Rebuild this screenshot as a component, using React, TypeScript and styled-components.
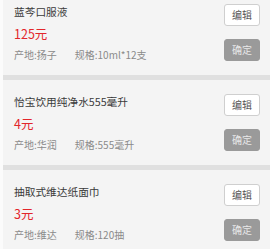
import React from "react";
import styled, { createGlobalStyle } from "styled-components";

const Global = createGlobalStyle`
  html, body { margin: 0; padding: 0; background: #fbfbfb; overflow: hidden; }
  body { font-family: "Noto Sans CJK SC", "Noto Sans", sans-serif; }
`;

const List = styled.div`
  margin-top: -10px;
  margin-left: 3px;
  display: flex;
  flex-direction: column;
  gap: 5px;
  background: #e0e0e0;
`;

const Card = styled.div`
  height: 85px;
  box-sizing: border-box;
  background: #f4f4f4;
  display: flex;
  justify-content: space-between;
  padding: 0 10px 0 11px;
`;

const Info = styled.div`
  padding-top: 12px;
  display: flex;
  flex-direction: column;
`;

const Title = styled.div`
  font-size: 10.7px;
  line-height: 20px;
  color: #3a3a3a;
`;

const Price = styled.div`
  margin-top: 1px;
  font-size: 12.5px;
  line-height: 22px;
  color: #e3262b;
`;

const Meta = styled.div`
  display: flex;
  font-size: 10px;
  line-height: 20px;
  color: #8a8a8a;
`;

const MetaItem = styled.span`
  margin-right: 18px;
`;

const Actions = styled.div`
  padding-top: 14px;
  display: flex;
  flex-direction: column;
  gap: 13px;
`;

const Button = styled.button<{ $primary?: boolean }>`
  width: 36px;
  height: 22px;
  box-sizing: border-box;
  padding: 0;
  border-radius: 3px;
  font-family: "Noto Sans CJK SC", sans-serif;
  font-size: 10px;
  line-height: 20px;
  border: 1px solid ${(p) => (p.$primary ? "#9a9a9a" : "#cfcfcf")};
  background: ${(p) => (p.$primary ? "#9a9a9a" : "#ffffff")};
  color: ${(p) => (p.$primary ? "#e8e8e8" : "#555")};
`;

const items = [
  { name: "蓝芩口服液", price: "125元", origin: "扬子", spec: "10ml*12支" },
  { name: "怡宝饮用纯净水555毫升", price: "4元", origin: "华润", spec: "555毫升" },
  { name: "抽取式维达纸面巾", price: "3元", origin: "维达", spec: "120抽" },
];

export default function App() {
  return (
    <>
      <Global />
      <List>
        {items.map((it) => (
          <Card key={it.name}>
            <Info>
              <Title>{it.name}</Title>
              <Price>{it.price}</Price>
              <Meta>
                <MetaItem>产地:{it.origin}</MetaItem>
                <span>规格:{it.spec}</span>
              </Meta>
            </Info>
            <Actions>
              <Button>编辑</Button>
              <Button $primary>确定</Button>
            </Actions>
          </Card>
        ))}
      </List>
    </>
  );
}
